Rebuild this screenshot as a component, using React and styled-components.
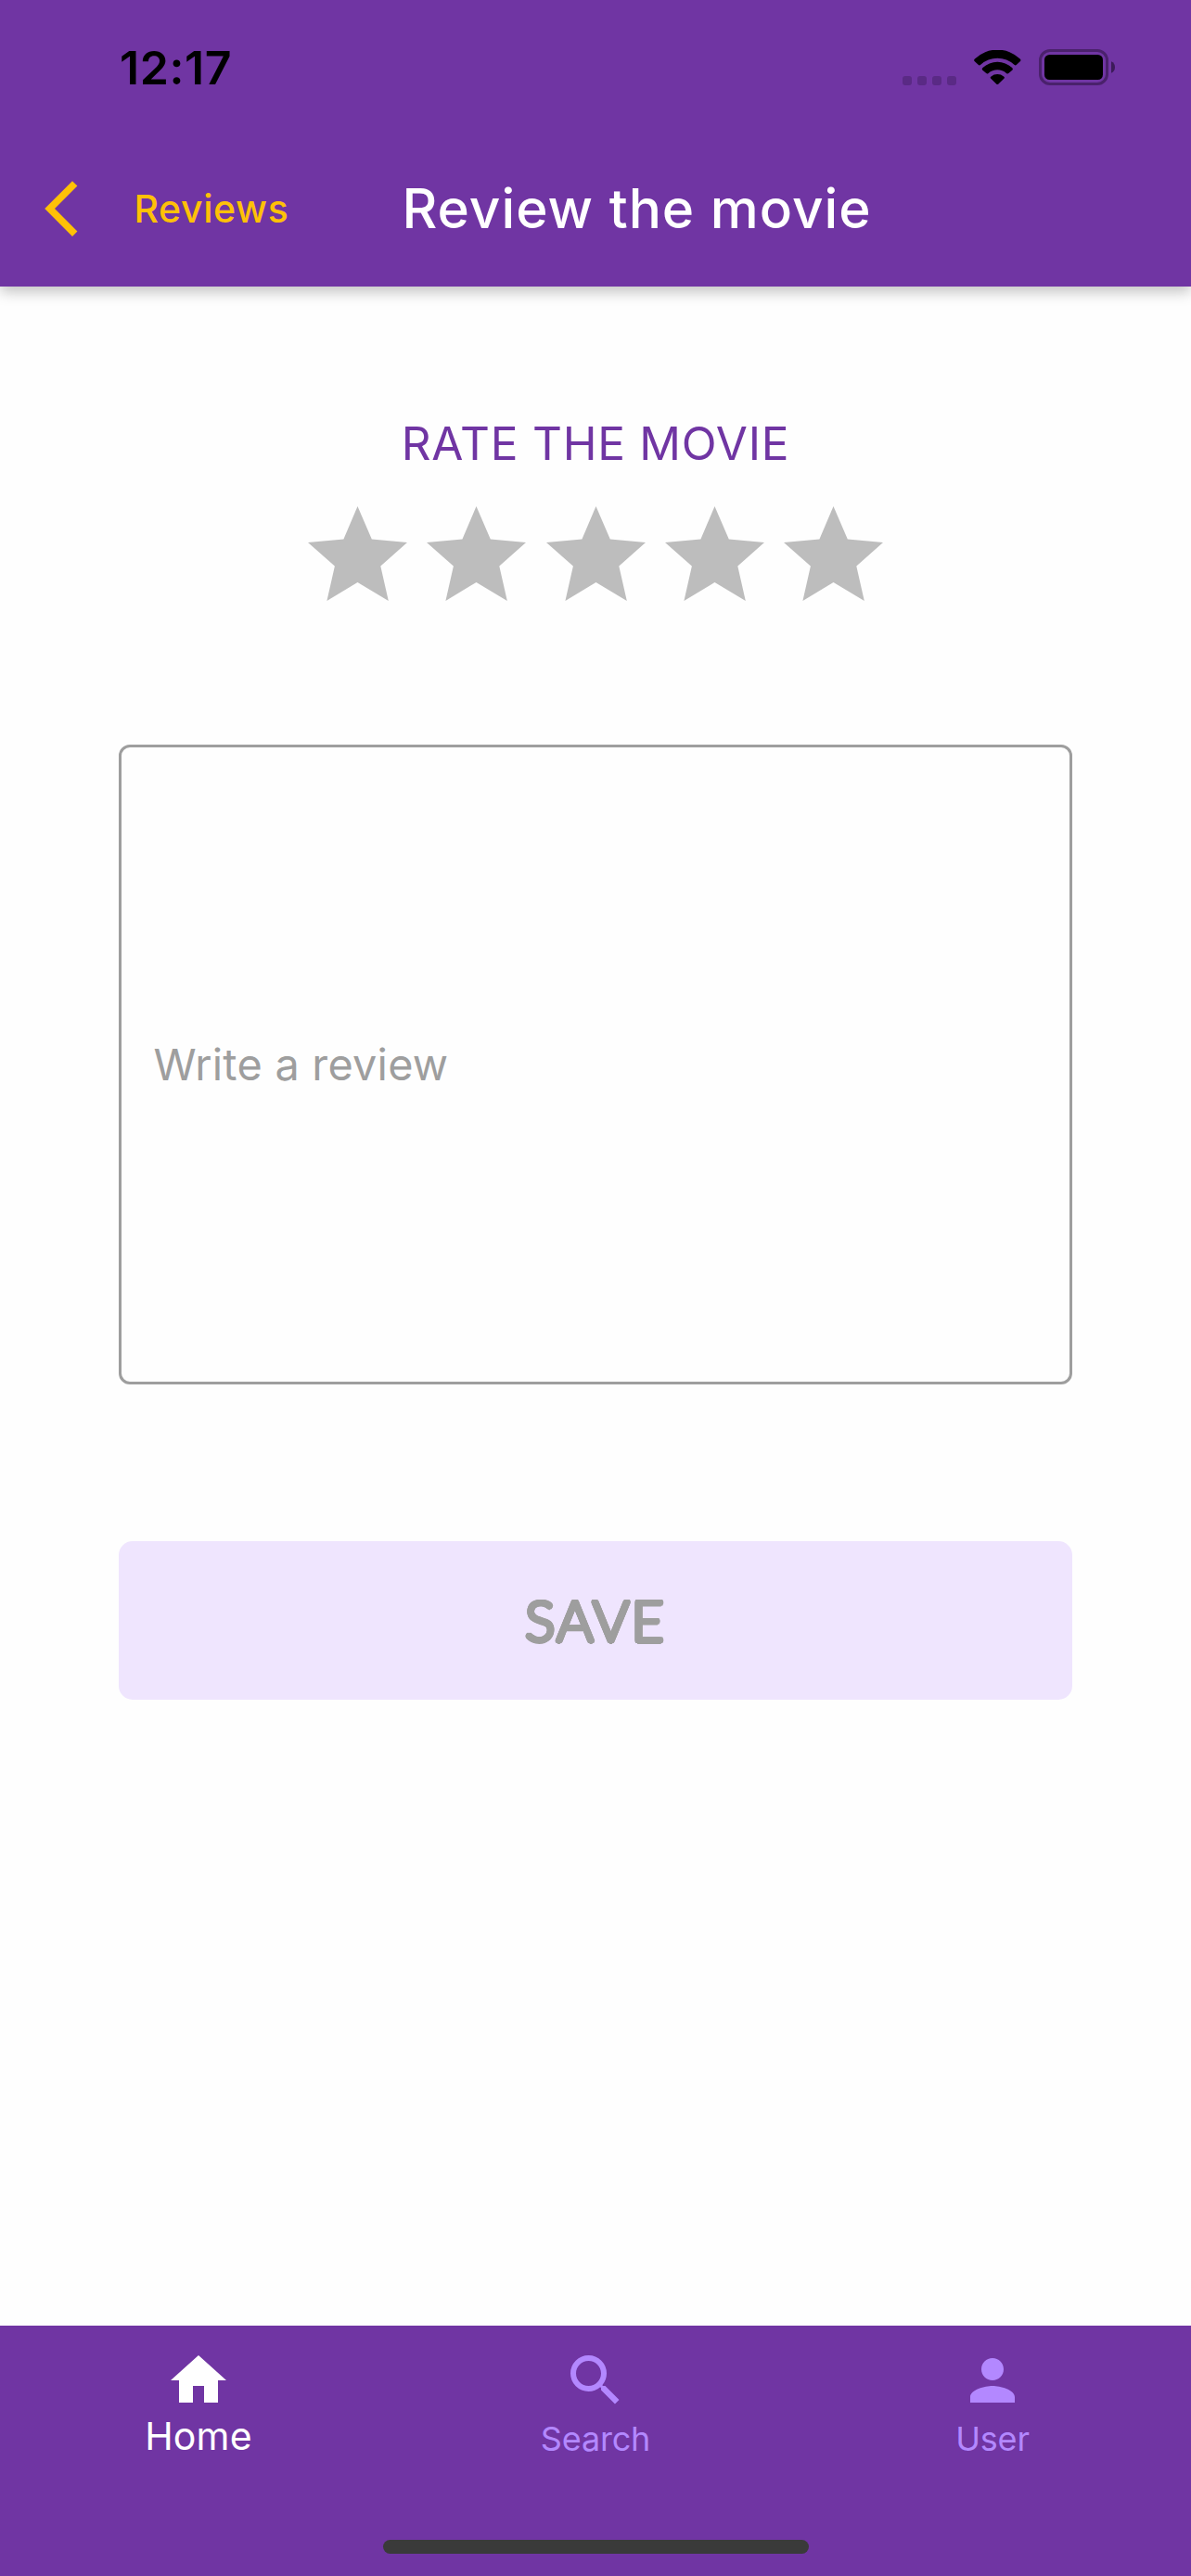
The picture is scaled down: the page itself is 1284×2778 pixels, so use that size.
import React, { useState } from 'react';
import styled, { createGlobalStyle } from 'styled-components';

const purple = '#7035a3';
const amber = '#ffc107';
const lilac = '#b388ff';
const grey = '#9e9e9e';

const GlobalStyle = createGlobalStyle`
  *, *::before, *::after { box-sizing: border-box; }
  html, body { margin: 0; padding: 0; background: #fefefe; }
  body { font-family: Inter, Roboto, sans-serif; }
  button { border: 0; background: none; padding: 0; font: inherit; color: inherit; }
`;

const Screen = styled.div`
  width: 1284px;
  height: 2778px;
  display: flex;
  flex-direction: column;
  background: #fefefe;
  overflow: hidden;
`;

const Header = styled.header`
  height: 309px;
  flex: none;
  background: ${purple};
  box-shadow: 0 6px 14px rgba(0, 0, 0, 0.23);
`;

const StatusBar = styled.div`
  height: 141px;
  padding: 5px 82px 0 129px;
  display: flex;
  align-items: center;
  justify-content: space-between;
`;

const Clock = styled.span`
  font-size: 50px;
  line-height: 60px;
  font-weight: 600;
  letter-spacing: 0.6px;
  color: #000;
`;

const StatusIcons = styled.div`
  display: flex;
  align-items: center;
  height: 40px;
`;

const SignalDots = styled.div`
  display: flex;
  gap: 6px;
  align-self: flex-end;
  margin: 0 19px 1px 0;
`;

const Dot = styled.i`
  width: 10px;
  height: 10px;
  border-radius: 3px;
  background: #5a2a85;
`;

const BatterySlot = styled.span`
  display: flex;
  margin-left: 19px;
`;

const Toolbar = styled.div`
  height: 168px;
  display: flex;
  align-items: center;
  padding-left: 48px;
`;

const BackButton = styled.button`
  display: flex;
  align-items: center;
  width: 385.5px;
  gap: 60.5px;
  color: ${amber};
  font-size: 41px;
  font-weight: 500;
  letter-spacing: 0.6px;
  line-height: 50px;
`;

const Title = styled.h1`
  margin: 0;
  font-size: 58.5px;
  line-height: 72px;
  font-weight: 500;
  letter-spacing: 1px;
  color: #fff;
  white-space: nowrap;
`;

const Content = styled.main`
  flex: 1;
  display: flex;
  flex-direction: column;
  align-items: center;
  padding: 139px 128.4px 0;
`;

const RateLabel = styled.h2`
  margin: 0;
  font-size: 49.5px;
  line-height: 60px;
  font-weight: 400;
  letter-spacing: 0.75px;
  color: ${purple};
  white-space: nowrap;
`;

const Stars = styled.div`
  display: flex;
  gap: 21.2px;
  margin-top: 38px;
`;

const StarButton = styled.button`
  width: 107px;
  height: 102px;
  display: block;
  color: ${(p) => (p.$active ? amber : '#bdbdbd')};
  svg { display: block; }
`;

const ReviewField = styled.label`
  align-self: stretch;
  height: 690px;
  margin-top: 155px;
  padding: 0 34px;
  display: flex;
  align-items: center;
  border: 3px solid ${grey};
  border-radius: 12px;
  color: ${grey};
  font-size: 46.8px;
  line-height: 60px;
  letter-spacing: 0.25px;
`;

const SaveButton = styled.button`
  && {
    align-self: stretch;
    height: 170.6px;
    margin-top: 169px;
    display: flex;
    align-items: center;
    justify-content: center;
    border-radius: 15px;
    background: #efe5fe;
    color: ${grey};
    font-family: Lato, sans-serif;
    font-weight: 300;
    font-size: 60.5px;
    line-height: 70px;
    letter-spacing: 2.2px;
    text-shadow:
      2.5px 0 ${grey}, -2.5px 0 ${grey}, 0 2.5px ${grey}, 0 -2.5px ${grey},
      1.8px 1.8px ${grey}, -1.8px 1.8px ${grey}, 1.8px -1.8px ${grey}, -1.8px -1.8px ${grey},
      2.3px 1px ${grey}, -2.3px 1px ${grey}, 2.3px -1px ${grey}, -2.3px -1px ${grey},
      1px 2.3px ${grey}, -1px 2.3px ${grey}, 1px -2.3px ${grey}, -1px -2.3px ${grey};
  }
`;

const BottomBar = styled.footer`
  flex: none;
  height: 270px;
  background: ${purple};
  display: flex;
  flex-direction: column;
  align-items: center;
  justify-content: space-between;
  padding: 23px 0 24px;
`;

const Tabs = styled.nav`
  align-self: stretch;
  display: grid;
  grid-template-columns: repeat(3, 1fr);
`;

const Tab = styled.button`
  display: flex;
  flex-direction: column;
  align-items: center;
  color: ${(p) => (p.$active ? '#fff' : lilac)};
  svg { display: block; }
`;

const TabLabel = styled.span`
  height: 48px;
  line-height: 48px;
  margin-top: ${(p) => (p.$active ? 0 : 3)}px;
  font-size: ${(p) => (p.$active ? 41 : 36)}px;
  letter-spacing: ${(p) => (p.$active ? 0.2 : -0.2)}px;
`;

const HomeIndicator = styled.div`
  width: 459px;
  height: 15px;
  border-radius: 8px;
  background: #3a3a3a;
`;

const WifiIcon = () => (
  <svg width="51" height="38" viewBox="0 0 51 38" fill="#000">
    <path d="M.9 9.5A35 35 0 0 1 49.7 9.5Q51.1 10.8 50 12L45.7 16Q44.7 16.9 43.4 15.8A26.5 26.5 0 0 0 7.2 15.8Q5.9 16.9 4.9 16L.6 12Q-.5 10.8.9 9.5Z" />
    <path d="M9.5 19.1A23 23 0 0 1 41.1 19.1Q42.6 20.5 41.5 21.5L37.3 25Q36.3 26 35 24.9A15 15 0 0 0 15.6 24.9Q14.3 26 13.3 25L9.1 21.5Q8 20.5 9.5 19.1Z" />
    <path d="M18.5 28.4A11 11 0 0 1 32.1 28.4Q33.6 29.5 32.6 30.6L26.2 36.7Q25.3 37.5 24.4 36.7L18 30.6Q17 29.5 18.5 28.4Z" />
  </svg>
);

const BatteryIcon = () => (
  <svg width="82" height="40" viewBox="0 0 82 40">
    <rect x="1.5" y="1.5" width="72" height="36" rx="10.5" fill="none" stroke="#4a216c" strokeWidth="3" />
    <rect x="6" y="6" width="63" height="27" rx="5.5" fill="#000" />
    <path d="M78 13.3Q82 15 82 19.5T78 25.7Z" fill="#3c1b59" />
  </svg>
);

const BackIcon = () => (
  <svg width="36" height="60" viewBox="0 0 36 60" fill="currentColor">
    <path d="M30 .3 35.4 5.4 11 30 35.4 54.6 30 59.9 .2 30Z" />
  </svg>
);

const StarIcon = () => (
  <svg width="107" height="102" viewBox="0 0 107 102" fill="currentColor">
    <path d="M53.5 0 68.8 35.6 107 39 78.3 64.4 86.8 102 53.5 82 20.4 102 28.9 64.4 0 39 38.4 35.6Z" />
  </svg>
);

const iconPaths = {
  Home: 'M10 20v-6h4v6h5v-8h3L12 3 2 12h3v8z',
  Search:
    'M15.5 14h-.79l-.28-.27A6.471 6.471 0 0 0 16 9.5 6.5 6.5 0 1 0 9.5 16c1.61 0 3.09-.59 4.23-1.57l.27.28v.79l5 4.99L20.49 19l-4.99-5zm-6 0C7.01 14 5 11.99 5 9.5S7.01 5 9.5 5 14 7.01 14 9.5 11.99 14 9.5 14z',
  User: 'M12 12c2.21 0 4-1.79 4-4s-1.79-4-4-4-4 1.79-4 4 1.79 4 4 4zm0 2c-2.67 0-8 1.34-8 4v2h16v-2c0-2.66-5.33-4-8-4z',
};

const TabIcon = ({ name }) => (
  <svg width="72" height="72" viewBox="0 0 24 24" fill="currentColor">
    <path d={iconPaths[name]} />
  </svg>
);

export default function App() {
  const [rating, setRating] = useState(0);
  const [tab, setTab] = useState('Home');

  return (
    <Screen>
      <GlobalStyle />
      <Header>
        <StatusBar>
          <Clock>12:17</Clock>
          <StatusIcons>
            <SignalDots>
              <Dot /><Dot /><Dot /><Dot />
            </SignalDots>
            <WifiIcon />
            <BatterySlot>
              <BatteryIcon />
            </BatterySlot>
          </StatusIcons>
        </StatusBar>
        <Toolbar>
          <BackButton>
            <BackIcon />
            Reviews
          </BackButton>
          <Title>Review the movie</Title>
        </Toolbar>
      </Header>
      <Content>
        <RateLabel>RATE THE MOVIE</RateLabel>
        <Stars>
          {[1, 2, 3, 4, 5].map((n) => (
            <StarButton key={n} $active={n <= rating} onClick={() => setRating(n)}>
              <StarIcon />
            </StarButton>
          ))}
        </Stars>
        <ReviewField>Write a review</ReviewField>
        <SaveButton>SAVE</SaveButton>
      </Content>
      <BottomBar>
        <Tabs>
          {['Home', 'Search', 'User'].map((name) => (
            <Tab key={name} $active={tab === name} onClick={() => setTab(name)}>
              <TabIcon name={name} />
              <TabLabel $active={tab === name}>{name}</TabLabel>
            </Tab>
          ))}
        </Tabs>
        <HomeIndicator />
      </BottomBar>
    </Screen>
  );
}
